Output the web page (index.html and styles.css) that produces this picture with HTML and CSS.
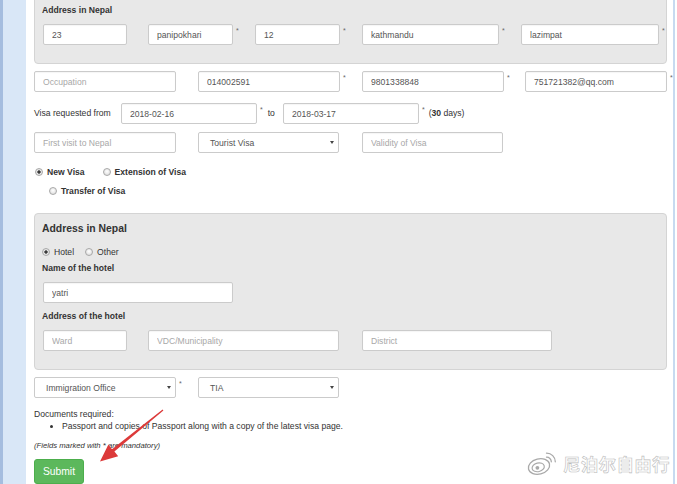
FILE: index.html
```html
<!DOCTYPE html>
<html lang="en">
<head>
<meta charset="utf-8">
<title>Visa application</title>
<link rel="stylesheet" href="styles.css">
</head>
<body>
<div class="frame">
  <aside class="side"></aside>
  <main class="content">
    <section class="panel panel-top">
      <div class="panel-title">Address in Nepal</div>
      <div class="addr-row">
        <div class="cell c105"><input class="inp w84" value="23"></div>
        <div class="cell c107"><input class="inp w85" value="panipokhari"><span class="req">*</span></div>
        <div class="cell c107"><input class="inp w85" value="12"><span class="req">*</span></div>
        <div class="cell c159"><input class="inp w137" value="kathmandu"><span class="req">*</span></div>
        <div class="cell"><input class="inp w138" value="lazimpat"><span class="req">*</span></div>
      </div>
    </section>

    <div class="grid4 row-contact">
      <div class="cell"><input class="inp w142" placeholder="Occupation"></div>
      <div class="cell"><input class="inp w142" value="014002591"><span class="req">*</span></div>
      <div class="cell"><input class="inp w142" value="9801338848"><span class="req">*</span></div>
      <div class="cell"><input class="inp w142" value="751721382@qq.com"><span class="req">*</span></div>
    </div>

    <div class="row-dates">
      <span class="lbl-from">Visa requested from</span>
      <input class="inp w136" value="2018-02-16">
      <span class="req">*</span>
      <span class="to">to</span>
      <input class="inp w136" value="2018-03-17">
      <span class="req">*</span>
      <span class="days">(<b>30</b> days)</span>
    </div>

    <div class="grid4 row-visa">
      <div class="cell"><input class="inp w142" placeholder="First visit to Nepal"></div>
      <div class="cell"><div class="sel w141"><span>Tourist Visa</span><span class="caret"></span></div></div>
      <div class="cell"><input class="inp w141" placeholder="Validity of Visa"></div>
    </div>

    <div class="radios">
      <div class="radio-line">
        <label class="radio bold first"><span class="dot on"></span>New Visa</label>
        <label class="radio bold second"><span class="dot"></span>Extension of Visa</label>
      </div>
      <div class="radio-line line2">
        <label class="radio bold"><span class="dot"></span>Transfer of Visa</label>
      </div>
    </div>

    <section class="panel panel-hotel">
      <h4 class="panel-heading">Address in Nepal</h4>
      <div class="radio-line hotel-radios">
        <label class="radio"><span class="dot on"></span>Hotel</label>
        <label class="radio other"><span class="dot"></span>Other</label>
      </div>
      <div class="sublabel">Name of the hotel</div>
      <div class="hotel-name"><input class="inp w190" value="yatri"></div>
      <div class="sublabel sub2">Address of the hotel</div>
      <div class="addr-row hotel-addr">
        <div class="cell c105"><input class="inp w84" placeholder="Ward"></div>
        <div class="cell c214"><input class="inp w191" placeholder="VDC/Municipality"></div>
        <div class="cell"><input class="inp w190" placeholder="District"></div>
      </div>
    </section>

    <div class="grid4 row-office">
      <div class="cell"><div class="sel w142 sel-office"><span>Immigration Office</span><span class="caret"></span></div><span class="req">*</span></div>
      <div class="cell"><div class="sel w141 sel-office"><span>TIA</span><span class="caret"></span></div></div>
    </div>

    <div class="docs">Documents required:</div>
    <ul class="doc-list">
      <li>Passport and copies of Passport along with a copy of the latest visa page.</li>
    </ul>
    <p class="note">(Fields marked with * are mandatory)</p>
    <button class="submit" type="button">Submit</button>
  </main>
  <div class="rail"></div>
</div>

<svg class="arrow" width="677" height="484" viewBox="0 0 677 484" aria-hidden="true">
  <polygon points="163.4,410.5 114.4,451.6 118.2,456.3 100,461.5 108.4,444.6 112,449.2 162.6,409.5" fill="#dc3a3a"/>
</svg>

<div class="watermark">
  <svg class="wb-logo" width="30" height="25" viewBox="0 0 30 25" aria-hidden="true">
    <ellipse cx="12" cy="15.5" rx="10.8" ry="7.6" transform="rotate(-14 12 15.5)" fill="#fff" stroke="#a9a9a9" stroke-width="1.3"/>
    <ellipse cx="11.2" cy="16.3" rx="6.2" ry="4.3" transform="rotate(-14 11.2 16.3)" fill="none" stroke="#a9a9a9" stroke-width="1.2"/>
    <circle cx="10.4" cy="16.8" r="1.9" fill="#a9a9a9"/>
    <path d="M19.5 6.2 a4.6 4.6 0 0 1 4.8 4.6" fill="none" stroke="#a9a9a9" stroke-width="1.3" stroke-linecap="round"/>
    <path d="M19.5 2.2 a8.6 8.6 0 0 1 8.8 8.6" fill="none" stroke="#a9a9a9" stroke-width="1.3" stroke-linecap="round"/>
  </svg>
  <span class="wb-text">尼泊尔自由行</span>
</div>
</body>
</html>
```

FILE: styles.css
```css
* { box-sizing: border-box; }
html, body { margin: 0; padding: 0; }
body {
  width: 677px;
  height: 484px;
  overflow: hidden;
  position: relative;
  background: #fff;
  color: #333;
  font-family: "Liberation Sans", Arial, sans-serif;
  font-size: 8.6px;
}

.frame { display: flex; height: 484px; }
.side {
  width: 26px;
  flex: none;
  background: linear-gradient(to right, #a5bddf 0, #a5bddf 3px, #d9e7f7 3px);
}
.content { flex: 1; min-width: 0; padding: 0 6px 0 8px; }
.rail { width: 2px; flex: none; margin-right: 2px; background: #c7daf0; }

/* panels */
.panel {
  background: #e8e8e8;
  border: 1px solid #d4d4d4;
  border-radius: 4px;
  padding: 0 7px 18px 7px;
}
.panel-top { margin-top: -8px; padding-top: 12px; }
.panel-title { font-weight: bold; line-height: 10px; }
.panel-hotel { margin-top: 16px; padding-top: 8px; }
.panel-heading {
  margin: 0;
  font-size: 10.4px;
  font-weight: bold;
  line-height: 13px;
}

.addr-row { display: flex; margin-top: 9px; padding-left: 1px; }
.cell { display: flex; align-items: flex-start; flex: none; }
.c105 { width: 105px; }
.c107 { width: 107px; }
.c159 { width: 159px; }
.c214 { width: 214px; }

/* inputs */
.inp {
  flex: none;
  height: 21px;
  margin: 0;
  padding: 0 8px;
  border: 1px solid #cbcbcb;
  border-radius: 2px;
  background: #fff;
  color: #555;
  font: inherit;
  outline: none;
  box-shadow: inset 0 1px 1px rgba(0, 0, 0, 0.04);
}
.inp::placeholder { color: #a8a8a8; }
.w84 { width: 84px; }
.w85 { width: 85px; }
.w136 { width: 136px; }
.w137 { width: 137px; }
.w138 { width: 138px; }
.w141 { width: 141px; }
.w142 { width: 142px; }
.w190 { width: 190px; }
.w191 { width: 191px; }

.req {
  margin-left: 3px;
  margin-top: 3px;
  font-size: 7px;
  line-height: 1;
  color: #666;
}

.sel {
  flex: none;
  display: flex;
  align-items: center;
  justify-content: space-between;
  height: 21px;
  padding: 0 4px 0 11px;
  border: 1px solid #cbcbcb;
  border-radius: 2px;
  background: #fff;
  color: #555;
}
.caret {
  width: 0;
  height: 0;
  border-left: 2.5px solid transparent;
  border-right: 2.5px solid transparent;
  border-top: 3.5px solid #444;
}

.grid4 { display: grid; grid-template-columns: 164px 164px 163px 1fr; }
.row-contact { margin-top: 7px; }
.row-visa { margin-top: 8px; }
.row-office { margin-top: 7px; }

.row-dates { display: flex; align-items: flex-start; margin-top: 11px; }
.lbl-from { width: 87px; flex: none; line-height: 21px; }
.to { margin-left: 5px; margin-right: 8px; line-height: 21px; }
.days { margin-left: 4px; line-height: 21px; }
.days b { color: #333; }

/* radios */
.radios { margin-top: 13px; }
.radio-line { display: flex; align-items: center; height: 12px; }
.line2 { margin-top: 7px; padding-left: 15px; }
.radio { display: inline-flex; align-items: center; line-height: 12px; }
.bold { font-weight: bold; }
.first { margin-left: 1px; }
.second { margin-left: 18px; }
.dot {
  width: 8px;
  height: 8px;
  margin-right: 4px;
  border: 1px solid #a8a8a8;
  border-radius: 50%;
  background: radial-gradient(circle at 50% 40%, #ffffff, #d6d6d6);
}
.dot.on {
  background: radial-gradient(circle, #3a3a3a 0, #3a3a3a 1.4px, #eeeeee 1.9px, #d6d6d6 100%);
}
.hotel-radios { margin-top: 11px; }
.hotel-radios .dot { margin-right: 4px; }
.other { margin-left: 11px; }

.sublabel { margin-top: 4px; font-weight: bold; line-height: 12px; }
.sub2 { margin-top: 7px; }
.hotel-name { margin-top: 8px; padding-left: 1px; }
.hotel-addr { margin-top: 8px; }

/* bottom */
.docs { margin-top: 10px; line-height: 12px; }
.doc-list { margin: 0; padding-left: 28px; line-height: 12px; }
.note {
  margin: 9px 0 0;
  font-size: 7.7px;
  font-style: italic;
  line-height: 10px;
}
.submit {
  display: block;
  width: 50px;
  height: 25px;
  margin-top: 8px;
  padding: 0;
  border: 1px solid #4cae4c;
  border-radius: 3px;
  background: #5cb85c;
  color: #fff;
  font-family: inherit;
  font-size: 10.3px;
}

/* overlays */
.arrow { position: absolute; top: 0; left: 0; pointer-events: none; }
.watermark {
  position: absolute;
  left: 527px;
  top: 451px;
  display: flex;
  align-items: center;
  gap: 6px;
}
.wb-text {
  font-family: "Noto Sans CJK SC", sans-serif;
  font-size: 17.5px;
  font-weight: bold;
  line-height: 24px;
  color: #fff;
  -webkit-text-stroke: 0.6px #bcbcbc;
  letter-spacing: 0.3px;
}
```
